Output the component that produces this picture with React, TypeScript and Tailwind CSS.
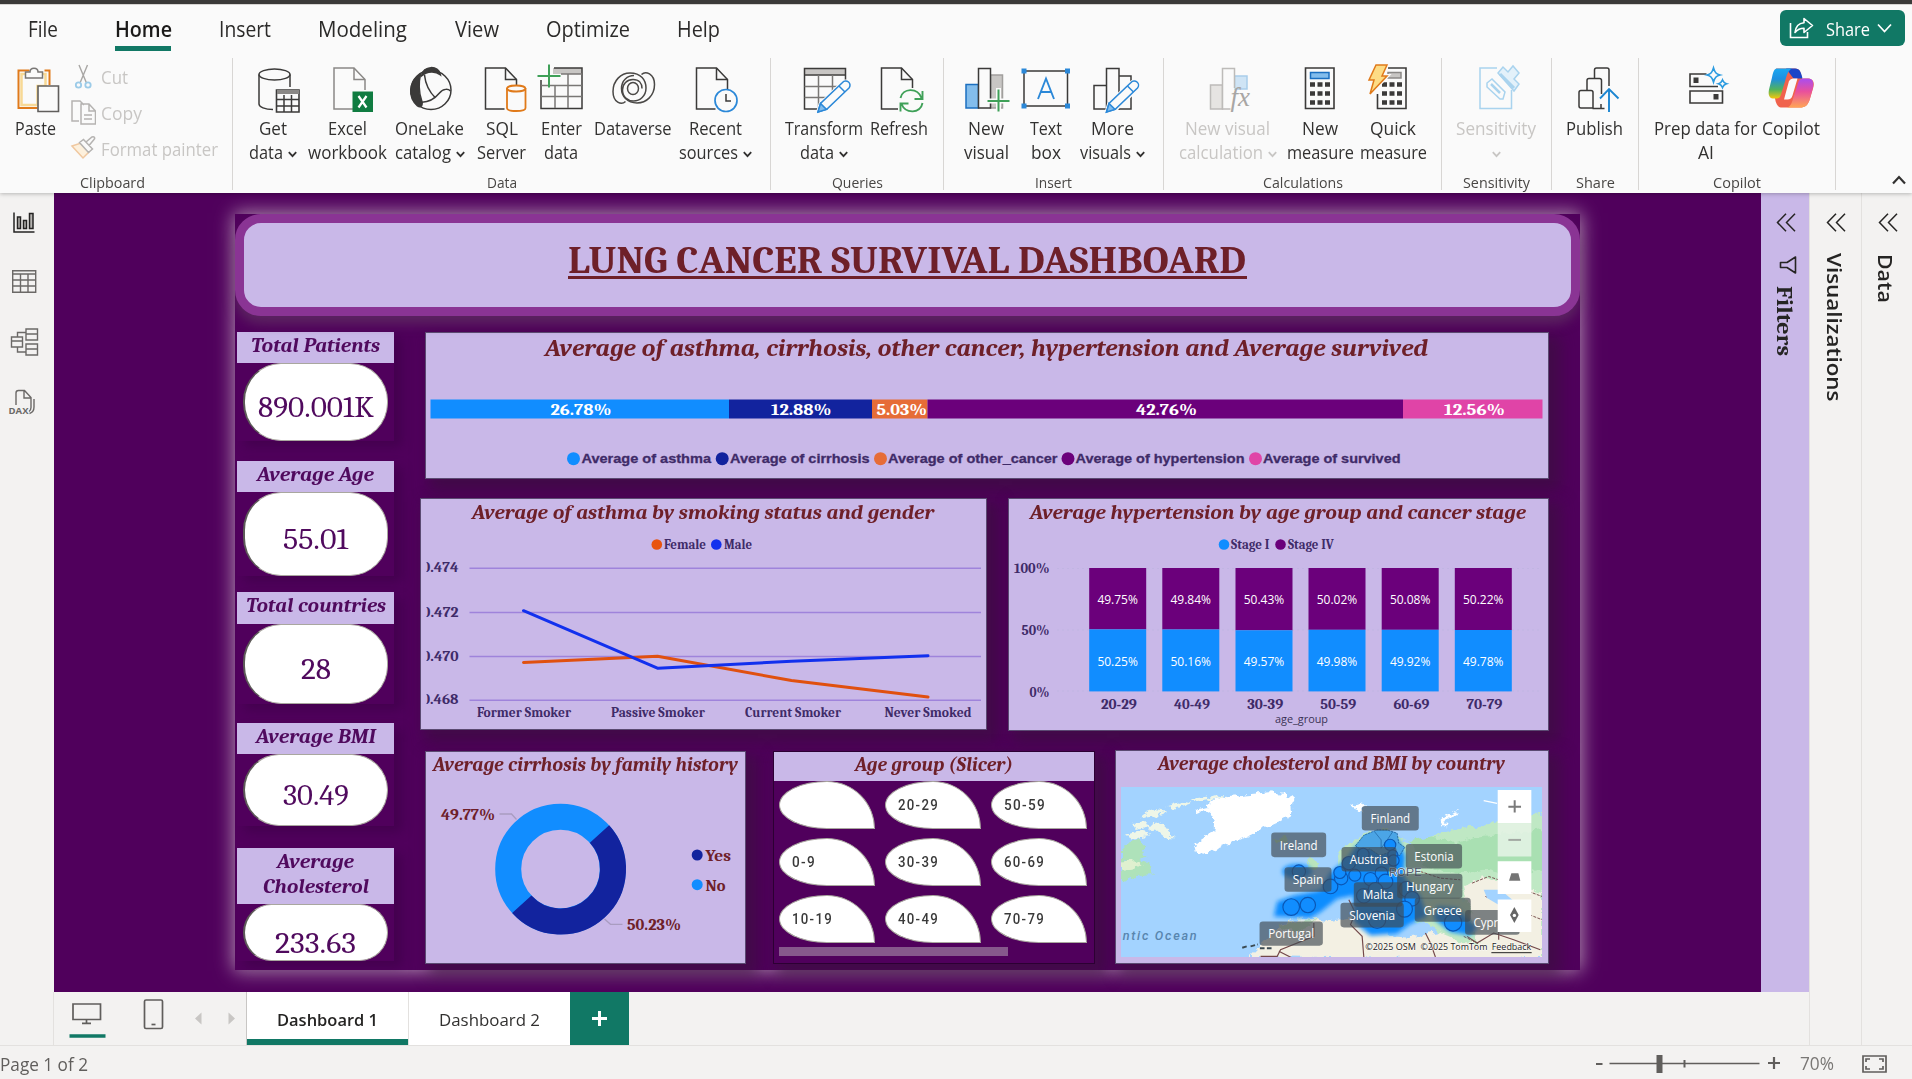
import React, { useLayoutEffect, useRef } from "react";

const SERIF = "font-[Cambria,Caladea,'Liberation_Serif',serif]";

/* Text that is condensed or expanded to a given advance width. */
function Fit({ w, className = "", vertical = false, children }: { w: number; className?: string; vertical?: boolean; children: React.ReactNode }) {
  const ref = useRef<HTMLSpanElement>(null);
  useLayoutEffect(() => {
    const el = ref.current;
    if (!el) return;
    const size = vertical ? el.offsetHeight : el.getBoundingClientRect().width;
    if (!size) return;
    el.style.transform = vertical ? `scaleY(${w / size})` : `scaleX(${w / size})`;
  }, [w, vertical, children]);
  return (
    <span className={"block shrink-0 whitespace-nowrap " + className} style={vertical ? { height: w } : { width: w }}>
      <span ref={ref} className={"inline-block " + (vertical ? "origin-top [writing-mode:vertical-rl]" : "origin-left")}>
        {children}
      </span>
    </span>
  );
}

function Chev({ className = "" }: { className?: string }) {
  return (
    <svg className={"h-[7px] w-[9px] shrink-0 " + className} viewBox="0 0 9 7" fill="none" stroke="currentColor" strokeWidth="1.8">
      <path d="M.8 1.2 4.5 5.2 8.2 1.2" />
    </svg>
  );
}

type Line = [string, number, boolean?];

function Item({ box, vx, lines, dim = false, children }: { box: string; vx: number; lines: Line[]; dim?: boolean; children: React.ReactNode }) {
  return (
    <div className={"flex shrink-0 flex-col items-center " + box + (dim ? " text-[#c8c6c4]" : " text-[#323130]")}>
      <svg className="h-[54px] w-[56px] shrink-0" viewBox={`${vx} 62 56 54`} fill="none" stroke="#3b3a39" strokeWidth="1.5">
        {children}
      </svg>
      {lines.map(([t, w, c], i) => (
        <div key={i} className="flex h-6 items-center gap-[5px] text-[17.500px] leading-6">
          {t && <Fit w={w}>{t}</Fit>}
          {c && <Chev className="mt-[5px]" />}
        </div>
      ))}
    </div>
  );
}

function Group({ box, label, lw, lcls = "", children }: { box: string; label: string; lw: number; lcls?: string; children: React.ReactNode }) {
  return (
    <div className={"flex shrink-0 " + box}>
      <div className="flex min-w-0 flex-1 flex-col items-center">
        <div className="flex h-[114px] w-full pt-1">{children}</div>
        <Fit w={lw} className={"text-[15px] leading-5 text-[#484644] " + lcls}>{label}</Fit>
      </div>
      <div className="h-[132px] w-px bg-[#d8d6d4]" />
    </div>
  );
}

function Doc({ x }: { x: number }) {
  return (
    <g>
      <path d={`M${x + 19} 109H${x}V68H${x + 20}L${x + 31} 79.500V90`} fill="none" />
      <path d={`M${x + 20} 68V79.500H${x + 31}`} />
    </g>
  );
}

function Pencil({ x }: { x: number }) {
  return (
    <g stroke="#2b88d8">
      <path d={`M${x} 112.500l2.500-8.500 22-21a4 4 0 0 1 6.500 5.500l-22 21z`} fill="#fafafa" stroke="#fafafa" strokeWidth="4" />
      <path d={`M${x} 112l2.500-8.500 22-21a4 4 0 0 1 6.500 5.500l-22 21z`} fill="#fafafa" />
      <path d={`M${x} 112l2.500-8.500 6 6z`} fill="#83bdec" />
      <path d={`M${x + 21} 86l6 6`} />
    </g>
  );
}

function Ribbon() {
  const tabs: [string, number, string][] = [
    ["File", 30, "ml-[28px]"],
    ["Home", 57, "ml-[57px]"],
    ["Insert", 52, "ml-[47px]"],
    ["Modeling", 89, "ml-[47px]"],
    ["View", 44, "ml-[48px]"],
    ["Optimize", 84, "ml-[47px]"],
    ["Help", 43, "ml-[47px]"],
  ];
  return (
    <header className="relative z-10 h-[193px] bg-[#fafafa] shadow-[0_1px_4px_rgba(0,0,0,0.25)]">
      <div className="h-[4px] bg-[#3b3a39]" />
      <div className="flex h-[54px] border-t border-[#d6d4d2]">
        {tabs.map(([t, w, m]) => (
          <div key={t} className={m + " pt-[8.500px]"}>
            <Fit w={w} className={"text-[21px] leading-[30px] " + (t === "Home" ? "font-semibold text-[#1b1a19]" : "text-[#2b2a29]")}>{t}</Fit>
            {t === "Home" && <div className="mt-[2.500px] h-[5px] w-[56px] bg-[#117865]" />}
          </div>
        ))}
        <button className="mt-[5px] mr-[7px] ml-auto flex h-[36px] w-[125px] items-center rounded-[6px] bg-[#117865] text-white">
          <svg className="ml-[9px] h-[24px] w-[26px]" viewBox="0 0 26 24" fill="none" stroke="#fff" strokeWidth="1.6">
            <path d="M1.500 7v14.500h17V16" />
            <path d="M15 2.500l8.500 7-8.500 7v-4.200c-4 0-6.500 1.200-9 4.200.6-6 3.500-9.300 9-9.800z" strokeLinejoin="round" />
          </svg>
          <Fit w={44} className="mt-px ml-[11px] text-[17.500px] leading-6">Share</Fit>
          <svg className="ml-[7px] h-[10px] w-[15px]" viewBox="0 0 15 10" fill="none" stroke="#fff" strokeWidth="1.7"><path d="M1 1.500l6.500 7 6.500-7" /></svg>
        </button>
      </div>
      <div className="flex">
        <Group box="w-[233px]" label="Clipboard" lw={65} lcls="mr-[7px]">
          <Item box="ml-[8px] w-[54px]" vx={7.5} lines={[["Paste", 41]]}>
            <path d="M30 70.500H19V108h19M45 70.500h5V85" stroke="#e07a1a" strokeWidth="2" />
            <path d="M22 74v31h16V86h8V74z" stroke="#f8d995" strokeWidth="2.500" fill="#fafafa" />
            <path d="M26 78v-6h4.500c0-5 8-5 8 0H43v6z" fill="#fafafa" stroke="#797775" />
            <path d="M38.500 86h20.500v25.500H38.500z" fill="#fafafa" strokeWidth="1.600" stroke="#605e5c" />
          </Item>
          <div className="ml-[8px] flex w-[155px] flex-col text-[17.500px] leading-6 text-[#c8c6c4]">
            <div className="flex h-[36px] gap-[4px]">
              <svg className="h-[30px] w-[26px]" viewBox="70 62 26 30" fill="none" stroke="#a8a6a4" strokeWidth="1.400">
                <path d="M79 65l7.500 18M87.500 65l-7.500 18" /><circle cx="78.500" cy="85" r="2.700" stroke="#9ccbe8" strokeWidth="1.800" /><circle cx="88" cy="85" r="2.700" stroke="#9ccbe8" strokeWidth="1.800" />
              </svg>
              <Fit w={27} className="mt-[3px] ml-[1px]">Cut</Fit>
            </div>
            <div className="flex h-[36px] gap-[4px]">
              <svg className="h-[30px] w-[26px]" viewBox="70 98 26 30" fill="none" stroke="#b5b3b1" strokeWidth="1.500">
                <path d="M79 121h-7v-20h8l4 4M81 104h8l6.500 7v13H81zM89 104v7h6M84 115h8M84 119h8" />
              </svg>
              <Fit w={41} className="mt-[3px] ml-[1px]">Copy</Fit>
            </div>
            <div className="flex h-[36px] gap-[4px]">
              <svg className="h-[30px] w-[26px]" viewBox="70 134 26 30" fill="none" stroke="#b5b3b1" strokeWidth="1.500">
                <path d="M72 146l9-3 8 9-6 6z" stroke="#f0c8a0" fill="#fdf0dc" /><path d="M79.500 142.500l4-3 9 9.500-4 3.500zM86 142l6-5c2-1 3.500 1 2 2.500l-5 6" fill="#fafafa" />
              </svg>
              <Fit w={117} className="mt-[3px] ml-[1px]">Format painter</Fit>
            </div>
          </div>
        </Group>

        <Group box="w-[538px]" label="Data" lw={30}>
          <Item box="ml-[12px] w-[56px]" vx={245} lines={[["Get", 28], ["data", 34, true]]}>
            <path d="M259 74.500V104c0 3 6 5.500 14 5.500M290 74.500V87" /><ellipse cx="274.500" cy="74.500" rx="15.500" ry="5.500" />
            <path d="M276.500 90h22.500v22h-22.500z" fill="#fafafa" strokeWidth="1.600" /><path d="M277 92h22" strokeWidth="4" stroke="#8a8886" /><path d="M277 99.500h22M277 106h22M284 95v17M291.500 95v17" />
          </Item>
          <Item box="ml-[6.500px] w-[80px]" vx={319.5} lines={[["Excel", 39], ["workbook", 79]]}>
            <g stroke="#8a8886"><Doc x={333.5} /></g>
            <path d="M352 91.500h20.500V112H352z" fill="#107c41" stroke="none" />
            <path d="M358 96l8 11.500M366 96l-8 11.500" stroke="#fff" strokeWidth="2.200" />
          </Item>
          <Item box="ml-[5px] w-[74px]" vx={401.5} lines={[["OneLake", 69], ["catalog", 56, true]]}>
            <ellipse cx="430.500" cy="90" rx="20" ry="19.500" />
            <path d="M421 76c1-11 18-11 19-1-5-4-13-4-19 1z" fill="#3b3a39" />
            <path d="M420 74c-12 8-13 23-3 32 3 2 6 0 4-6-3-9-3-17-1-26z" fill="#3b3a39" />
            <path d="M424 75c1 10 5 17 11 23M419 102c9 1 15-3 20-9 4-5 9-4 11-2" />
          </Item>
          <Item box="ml-[10px] w-[50px]" vx={473.5} lines={[["SQL", 32], ["Server", 49]]}>
            <Doc x={485} />
            <path d="M506.500 88v20c0 4 18.500 4 18.500 0V88" stroke="#e07a1a" fill="#fafafa" strokeWidth="1.800" /><ellipse cx="515.700" cy="88.500" rx="9.200" ry="3" stroke="#e07a1a" fill="#fafafa" strokeWidth="1.800" />
          </Item>
          <Item box="ml-[12.500px] w-[44px]" vx={533} lines={[["Enter", 41], ["data", 34]]}>
            <path d="M553 71h29" stroke="#c8c6c4" strokeWidth="6" /><path d="M554 68h28v40.500h-41V80" /><path d="M561 74h21M541 85.500h41M541 96.500h41M555 86v22M568 74v34" stroke="#797775" />
            <path d="M549 64.500v23M537.500 76h23" stroke="#3fa058" strokeWidth="2" />
          </Item>
          <Item box="ml-[11px] w-[78px]" vx={605} lines={[["Dataverse", 77.5]]}>
            <g stroke="#4a4846">
              <path d="M625.500 101.500c-4 4-12.500 1-12.500-10 0-11 8-18.500 17-18.500 11 0 16 7 16 15 0 8-6 13-12.500 13-6 0-11-4-11-11 0-6 4.500-10.500 10.500-10.500s9 4 9 9" />
              <path d="M641.500 74.500c4-4 13-1 13 10 0 11-8 18.500-17.500 18.500-10 0-15.500-7-15.500-14.500 0-8 6-13 12.500-13" />
              <ellipse cx="633" cy="88.500" rx="5.500" ry="6" />
            </g>
          </Item>
          <Item box="ml-[6px] w-[74px]" vx={690} lines={[["Recent", 53], ["sources", 59, true]]}>
            <Doc x={699.5} />
            <circle cx="729" cy="100.500" r="11" stroke="#2b88d8" fill="#fafafa" strokeWidth="1.700" /><path d="M729 94v7h5" />
          </Item>
        </Group>

        <Group box="w-[173px]" label="Queries" lw={51}>
          <Item box="ml-[12.500px] w-[80px]" vx={795.5} lines={[["Transform", 78], ["data", 34, true]]}>
            <path d="M804 71.500h41" stroke="#c8c6c4" strokeWidth="6" /><path d="M845 80V68.500h-41V109h15M804 75h41" /><path d="M804 86.500h35M804 97.500h25M818 75v34M832 75v20" stroke="#797775" />
            <Pencil x={817.5} />
          </Item>
          <Item box="ml-[5.500px] w-[60px]" vx={871} lines={[["Refresh", 58]]}>
            <Doc x={881.5} />
            <path d="M898 88h26v25h-26z" fill="#fafafa" stroke="none" />
            <g stroke="#3fa058" strokeWidth="1.900"><path d="M900.500 98c2-10 17-11 21 0M922.500 91v8h-8M922.500 103c-2 11-17 11-21 1M900.500 111.500v-8h8" /></g>
          </Item>
        </Group>

        <Group box="w-[220px]" label="Insert" lw={37}>
          <Item box="ml-[19px] w-[46px]" vx={958} lines={[["New", 36], ["visual", 45]]}>
            <path d="M990.500 75h12v33h-12z" fill="#c8c6c4" stroke="#a19f9d" />
            <path d="M966 84.500h12.500V108H966z" fill="#83bdec" stroke="#1b6fc0" /><path d="M978.500 68.500h12V108h-12z" fill="#fafafa" />
            <path d="M998.500 88v24M986 101h24" stroke="#fafafa" strokeWidth="5" /><path d="M998.500 89.500v22M987.500 101h22" stroke="#3fa058" strokeWidth="2" />
          </Item>
          <Item box="ml-[20px] w-[34px]" vx={1018} lines={[["Text", 32], ["box", 30]]}>
            <path d="M1024 71h43.500v35H1024z" />
            <path d="M1021.500 68.500h5v5h-5zM1065 68.500h5v5h-5zM1021.500 103.500h5v5h-5zM1065 103.500h5v5h-5z" fill="#2b88d8" stroke="none" />
            <path d="M1038 99l8-20.500 8 20.500M1041 92h10" stroke="#2b88d8" strokeWidth="1.900" />
          </Item>
          <Item box="ml-[16px] w-[66px]" vx={1084} lines={[["More", 43], ["visuals", 51, true]]}>
            <path d="M1119 76h12v33h-12M1106.500 85.500H1094V109h12.500" /><path d="M1106.500 68.500h12.500V109h-12.500z" fill="#fafafa" />
            <Pencil x={1106.5} />
          </Item>
        </Group>

        <Group box="w-[278px]" label="Calculations" lw={80}>
          <Item dim box="ml-[13.500px] w-[100px]" vx={1199.5} lines={[["New visual", 85], ["calculation", 84, true]]}>
            <g stroke="#bdbbb9"><path d="M1234 76h12.500v13H1234z" fill="#cfe4f5" stroke="#a9cdea" /><path d="M1210 85h12v24h-12z" fill="#e6e4e2" /><path d="M1234 88V68.500h-12V109h8" fill="#fafafa" /></g>
            <text x="1230" y="106" fontSize="27" fontStyle="italic" fill="#a8a6a4" stroke="none" fontFamily="Liberation Serif, serif">fx</text>
          </Item>
          <Item box="ml-[8.500px] w-[68px]" vx={1292} lines={[["New", 36], ["measure", 67]]}>
            <path d="M1305.500 68h28.500v40.500h-28.500z" strokeWidth="1.600" /><path d="M1310.500 72.500h18.500v6h-18.500z" fill="#83bdec" stroke="#1b6fc0" />
            <path d="M1310 84.500h20M1310 93.500h20M1310 102.500h20" strokeWidth="4.500" strokeDasharray="5 2.500" />
          </Item>
          <Item box="ml-[5px] w-[68px]" vx={1365} lines={[["Quick", 46], ["measure", 67]]}>
            <path d="M1388 68h18v40.500h-28.500V94" strokeWidth="1.600" /><path d="M1388 72.500h13v5.500h-13z" fill="#c8c6c4" stroke="#8a8886" />
            <path d="M1382 84.500h20M1382 93.500h20M1382 102.500h20" strokeWidth="4.500" strokeDasharray="5 2.500" />
            <path d="M1376 65h11l-5 11h5l-17 18 4-14h-5z" fill="#fddc85" stroke="#fafafa" strokeWidth="4" /><path d="M1376 65h11l-5 11h5l-17 18 4-14h-5z" fill="#fddc85" stroke="#e07a1a" />
          </Item>
        </Group>

        <Group box="w-[110px]" label="Sensitivity" lw={67}>
          <Item dim box="ml-[13px] w-[82px]" vx={1468} lines={[["Sensitivity", 80], ["", 0, true]]}>
            <g stroke="#a9d3ee"><path d="M1497 68h-17v40.500h31.500V90" /><path d="M1487 83l5-4 13 13-2 7-3 0-13-12z" fill="#fafafa" /><path d="M1491 84l9 9" strokeWidth="2.500" /><path d="M1498 73l5-6 5 5 5-6 6 7-5 6 5 5-5 7z" fill="#e3f1fa" /><path d="M1500 74l14 14" strokeWidth="3" /></g>
          </Item>
        </Group>

        <Group box="w-[87px]" label="Share" lw={39}>
          <Item box="ml-[13.500px] w-[58px]" vx={1566.5} lines={[["Publish", 57]]}>
            <g><path d="M1594 78v-8q0-2 2-2h10.500q2 0 2 2v16M1586.500 90V80.500q0-2 2-2h10.500q2 0 2 2V94M1578.500 106V92.500q0-2 2-2h10q2 0 2 2v15.500h-12q-2 0-2-2M1592 108.500h12M1600.500 104v4" /></g>
            <path d="M1608.500 112V90M1599.500 98.500l9-9.500 9.500 9.500" stroke="#1c86d1" strokeWidth="1.900" />
          </Item>
        </Group>

        <Group box="w-[197px]" label="Copilot" lw={48}>
          <Item box="ml-[14.500px] w-[104px]" vx={1677.500} lines={[["Prep data for", 103], ["AI", 16]]}>
            <g strokeWidth="1.600"><path d="M1706 74h-16.500v12.500h28M1689.500 91h32.500v12h-32.500z" /></g>
            <path d="M1693 77.500h5v5.500h-5zM1713 94h5v5.500h-5z" fill="#3b3a39" stroke="none" />
            <path d="M1713 68c1.500 5 3 6 6.500 7-3.500 1-5 2-6.500 7-1.500-5-3-6-6.500-7 3.500-1 5-2 6.500-7zM1722 80c1 2.500 1.500 3 4 3.700-2.500.8-3 1.300-4 3.800-1-2.500-1.500-3-4-3.800 2.500-.7 3-1.200 4-3.700z" stroke="#2b9be0" strokeWidth="1.700" />
          </Item>
          <Item box="ml-[4.500px] w-[58px]" vx={1763} lines={[["Copilot", 58]]}>
            <defs>
              <linearGradient id="cp1" x1="0" y1="0" x2="0" y2="1"><stop offset="0" stopColor="#1aa7f0" /><stop offset=".35" stopColor="#1d8fe0" /><stop offset=".7" stopColor="#52b35c" /><stop offset="1" stopColor="#f5c70c" /></linearGradient>
              <linearGradient id="cp2" x1="0" y1="0" x2="0" y2="1"><stop offset="0" stopColor="#a94df0" /><stop offset=".45" stopColor="#e9509c" /><stop offset="1" stopColor="#ffa655" /></linearGradient>
            </defs>
            <path d="M1776 68.500h19c5 0 6 4 7 10h6c5 0 7 4 5 10l-3 10c-2 7-5 9-10 9h-18c-4 0-6-3-7-9z" fill="#f0624c" stroke="none" />
            <path d="M1786 68.500h9c5 0 6 4 7.500 10h-9z" fill="#1b45c8" stroke="none" />
            <path d="M1777 68.500h15c-4 2-5 6-7 13l-4 13c-1 3-2 4-4 4h-3c-5 0-6-4-5-9l3-12c1-5 2-9 5-9z" fill="url(#cp1)" stroke="none" />
            <path d="M1805 78.500h3c5 0 6 4 5 9l-3 11c-2 7-5 9-10 9h-13c4-1 5-5 7-12l4-12c1-4 3-5 7-5z" fill="url(#cp2)" stroke="none" />
            <path d="M1789 81q1.500-2.500 4-2.500h4.500l-5 17q-1 4-5 4h-3.500z" fill="#fafafa" stroke="none" />
          </Item>
        </Group>
        <svg className="mt-[117px] mr-[6px] ml-auto h-[10px] w-[14px]" viewBox="0 0 14 10" fill="none" stroke="#323130" strokeWidth="2.200"><path d="M1 8.500 7 2l6 6.500" /></svg>
      </div>
    </header>
  );
}

function LeftRail() {
  return (
    <nav className="flex w-[54px] shrink-0 flex-col bg-[#f3f2f1] pt-[15px]">
      <svg className="h-[220px] w-[54px]" viewBox="0 208 54 220" fill="none" stroke="#6b6967" strokeWidth="1.400">
        <g stroke="#252423" strokeWidth="1.500"><path d="M14 212.500v19.500h20.500" /><path d="M17.500 217h3v11.500h-3zM23.500 220.500h3v8h-3zM29.500 213.500h3.500v15h-3.500z" fill="#b5b3b1" /></g>
        <path d="M12.700 270.700h23v21.600h-23zM12.700 274h23M12.700 280h23M12.700 286h23M20.500 274v18.300M28 274v18.300" />
        <path d="M26 329h11.500v11H26zM26 334h11.500M11.500 337h11v10h-11zM11.500 341h11M26 344h11.500v11H26zM26 349h11.500M17.500 337v-4.500H26M17.500 347v5H26" />
        <path d="M16 405v-12q0-2.500 2.500-2.500h6l6.500 7v10q0 2.500-2 4M24 390.500v7.500h7M34 399v8q0 5-4.500 6.500" />
        <text x="8.500" y="414" fontSize="9.500" fontWeight="700" fill="#6b6967" stroke="none" fontFamily="Open Sans, sans-serif" textLength="20" lengthAdjust="spacingAndGlyphs">DAX</text>
      </svg>
    </nav>
  );
}

const T = ({ x, y, w, s = 13, f = "s", b = 700, fill = "#3f2b68", children }: { x: number; y: number; w: number; s?: number; f?: string; b?: number; fill?: string; children: string }) => (
  <text x={x} y={y} textLength={w} lengthAdjust="spacingAndGlyphs" fontSize={s} fontWeight={b} fill={fill}
    fontFamily={f === "s" ? "Cambria, Caladea, 'Liberation Serif', serif" : f === "o" ? "'Open Sans', sans-serif" : "'Liberation Sans', sans-serif"}>{children}</text>
);

function Kpi({ lines, value, vw, head, pill, vpt }: { lines: [string, number][]; value: string; vw: number; head: string; pill: string; vpt: string }) {
  return (
    <div className="w-[157px] shrink-0 shadow-[8px_6px_10px_rgba(50,0,60,0.4)]">
      <div className={"flex flex-col items-center bg-[#c9b8e8] pt-px " + head}>
        {lines.map(([t, w]) => (
          <Fit key={t} w={w} className={"text-[20px] leading-[25px] font-bold text-[#500a5e] italic " + SERIF}>{t}</Fit>
        ))}
      </div>
      <div className={"ml-[5.500px] flex w-[145px] justify-center rounded-[38px] border border-l-[2px] border-[#a9a79f] border-l-[#5d5a58] bg-white " + pill}>
        <div className={vpt}>
          <Fit w={vw} className={"text-[30px] leading-[34px] text-[#500a5e] " + SERIF}>{value}</Fit>
        </div>
      </div>
    </div>
  );
}

function Card({ box, title, tw, tcls, children }: { box: string; title: string; tw: number; tcls: string; children: React.ReactNode }) {
  return (
    <section className={"flex shrink-0 flex-col border border-[#5b4a72] bg-[#c9b8e8] shadow-[8px_8px_14px_4px_rgba(56,16,60,0.6)] " + box}>
      <div className="flex justify-center">
        <Fit w={tw} className={"font-bold text-[#6e2029] italic " + SERIF + " " + tcls}>{title}</Fit>
      </div>
      {children}
    </section>
  );
}

function SurvivalBar() {
  const segs: [number, number, string, string, number, number][] = [
    [430, 728.5, "#118dff", "26.78%", 550, 61],
    [728.5, 871.5, "#12239e", "12.88%", 770.5, 60.5],
    [871.5, 927, "#e66c37", "5.03%", 876, 50.5],
    [927, 1402.5, "#6b007b", "42.76%", 1135.5, 61],
    [1402.5, 1542, "#e044a7", "12.56%", 1443.5, 61],
  ];
  const leg: [number, string, string, number, number][] = [
    [573, "#118dff", "Average of asthma", 581, 129.5],
    [721.7, "#12239e", "Average of cirrhosis", 729.5, 139.5],
    [880, "#e66c37", "Average of other_cancer", 887.5, 169.5],
    [1067.5, "#6b007b", "Average of hypertension", 1075, 169],
    [1255, "#e044a7", "Average of survived", 1262.5, 137.5],
  ];
  return (
    <svg className="h-[109px] w-[1122px]" viewBox="425.500 367 1122 109">
      {segs.map(([a, b, c, t, x, w]) => (
        <g key={t}><rect x={a} y="399.500" width={b - a} height="19" fill={c} /><T x={x} y={414.500} w={w} s={17} fill="#fff">{t}</T></g>
      ))}
      {leg.map(([cx, c, t, x, w]) => (
        <g key={t} stroke="#3f2b68" strokeWidth="0.300"><circle cx={cx} cy="458.700" r="6.500" fill={c} stroke="none" /><T x={x} y={463.300} w={w} s={13} f="a">{t}</T></g>
      ))}
    </svg>
  );
}

function LineChart() {
  const cats: [string, number, number][] = [["Former Smoker", 476.5, 94], ["Passive Smoker", 610.5, 94], ["Current Smoker", 744.5, 96], ["Never Smoked", 884, 87]];
  const ys: [string, number][] = [["0.474", 568.3], ["0.472", 612.5], ["0.470", 656.5], ["0.468", 700.3]];
  return (
    <svg className="h-[198px] w-[565px]" viewBox="420.500 530 565 198">
      <circle cx="656.300" cy="544.500" r="5.300" fill="#e8540f" /><T x={663.500} y={549} w={42}>Female</T>
      <circle cx="715.800" cy="544.500" r="5.300" fill="#1230ee" /><T x={723.500} y={549} w={28}>Male</T>
      <clipPath id="yclip"><rect x="426" y="530" width="40" height="190" /></clipPath>
      {ys.map(([t, y]) => (
        <g key={t}><path d={`M469 ${y}H980.500`} stroke="#9f83db" strokeWidth="1.500" /><g clipPath="url(#yclip)"><T x={421.500} y={y + 4} w={36.500}>{t}</T></g></g>
      ))}
      {cats.map(([t, x, w]) => <T key={t} x={x} y={716.500} w={w}>{t}</T>)}
      <path d="M523 662.500 657 656.300 791 680.500 927.500 697" fill="none" stroke="#e0500f" strokeWidth="3" strokeLinecap="round" strokeLinejoin="round" />
      <path d="M523 610.700 657.500 668.300 791 661.300 927.500 655.700" fill="none" stroke="#1230ee" strokeWidth="3" strokeLinecap="round" strokeLinejoin="round" />
    </svg>
  );
}

function StackChart() {
  const bars: [number, string, string, string, number][] = [
    [1088.7, "20-29", "49.75%", "50.25%", 629.4], [1161.8, "40-49", "49.84%", "50.16%", 629.5], [1235, "30-39", "50.43%", "49.57%", 630.3],
    [1308, "50-59", "50.02%", "49.98%", 629.8], [1381.2, "60-69", "50.08%", "49.92%", 629.8], [1454.3, "70-79", "50.22%", "49.78%", 630],
  ];
  return (
    <svg className="h-[199px] w-[539px]" viewBox="1008.500 530 539 199">
      <circle cx="1223.500" cy="544.500" r="5.300" fill="#118dff" /><T x={1230.500} y={549} w={38.500}>Stage I</T>
      <circle cx="1280" cy="544.500" r="5.300" fill="#6b007b" /><T x={1287.500} y={549} w={46}>Stage IV</T>
      <path d="M1057 568.500h485M1057 630h485M1057 691h485" stroke="#b9b3dc" strokeDasharray="1 4" />
      <T x={1013.500} y={573} w={35.500} s={14.5}>100%</T><T x={1021} y={635} w={28} s={14.5}>50%</T><T x={1029} y={697} w={20} s={14.5}>0%</T>
      {bars.map(([x, c, a, b, m]) => (
        <g key={c}>
          <rect x={x} y="568" width="57" height={m - 568} fill="#6b007b" /><rect x={x} y={m} width="57" height={691.4 - m} fill="#118dff" />
          <T x={x + 8.200} y={603.500} w={40.500} s={13} f="o" b={500} fill="#fff">{a}</T>
          <T x={x + 8.200} y={665.500} w={40.500} s={13} f="o" b={500} fill="#fff">{b}</T>
          <T x={x + 11.700} y={708.500} w={36} s={14.5}>{c}</T>
        </g>
      ))}
      <T x={1274.500} y={723} w={53} s={11.5} f="o" b={500} fill="#3b3355">age_group</T>
    </svg>
  );
}

function Donut() {
  return (
    <svg className="h-[181px] w-[319px]" viewBox="425.500 781 319 181">
      <circle cx="560" cy="869" r="52.300" fill="none" stroke="#118dff" strokeWidth="26" />
      <path d="M599 834A52.300 52.300 0 1 1 521.300 904.200" fill="none" stroke="#12239e" strokeWidth="26" />
      <path d="M499 814h12l5 5.500M604 919l6 5.300h12" fill="none" stroke="#a99cc0" strokeWidth="1.300" />
      <T x={440.500} y={819.500} w={54} s={16.500} fill="#6e2029">49.77%</T>
      <T x={626.500} y={929.500} w={54} s={16.500} fill="#6e2029">50.23%</T>
      <circle cx="696.700" cy="855" r="5.500" fill="#12239e" /><T x={705} y={860.500} w={25.500} s={17} fill="#6e2029">Yes</T>
      <circle cx="696.700" cy="884.700" r="5.500" fill="#118dff" /><T x={705} y={890.500} w={20} s={17} fill="#6e2029">No</T>
    </svg>
  );
}

function Slicer() {
  const cells: [string, number][] = [["", 0], ["20-29", 41], ["50-59", 42], ["0-9", 24], ["30-39", 41], ["60-69", 41], ["10-19", 41], ["40-49", 41], ["70-79", 41]];
  return (
    <section className="mt-px ml-[27px] flex h-[213px] w-[322px] shrink-0 flex-col border border-[#2c0033] bg-[#50005c] shadow-[8px_8px_14px_4px_rgba(56,16,60,0.6)]">
      <div className="flex h-[29px] shrink-0 justify-center bg-[#c9b8e8]">
        <Fit w={158} className={"text-[20px] leading-[26px] font-bold text-[#6e2029] italic " + SERIF}>Age group (Slicer)</Fit>
      </div>
      <div className="ml-[5px] grid grid-cols-[96px_96px_96px] gap-x-[10px] gap-y-[9px]">
        {cells.map(([t, w]) => (
          <div key={t} className="flex h-[48px] items-center rounded-[50%_50%_0_50%/50%_100%_0_50%] border border-[#a9a79f] bg-white pl-[12px]">
            {t && <Fit w={w} className="font-[Roboto,sans-serif] text-[15.500px] leading-5 font-medium tracking-[1.500px] text-[#3a3a3a]">{t}</Fit>}
          </div>
        ))}
      </div>
      <div className="mt-[4px] ml-[5px] h-[9px] w-[229px] bg-[#86588c]" />
    </section>
  );
}

function CountryMap() {
  const labels: [string, number, number, number, number, number][] = [
    ["Finland", 784, 198, 171, 74, 119], ["Ireland", 512, 278, 165, 74, 113], ["Estonia", 916, 312, 169, 74, 118], ["Austria", 723, 321, 165, 74, 115],
    ["Spain", 552, 382, 141, 74, 92], ["Hungary", 890, 402, 196, 74, 142], ["Malta", 760, 427, 146, 74, 93], ["Greece", 943, 474, 168, 72, 115],
    ["Slovenia", 720, 489, 190, 74, 138], ["Cypr", 1094, 511, 164, 74, 75], ["Portugal", 477, 545, 190, 73, 138],
  ];
  const dots = [[595, 395, 20], [572, 502, 25], [622, 496, 23], [690, 440, 22], [722, 415, 20], [763, 406, 18], [788, 343, 18], [869, 315, 17], [877, 345, 15], [879, 362, 17], [810, 418, 20], [843, 400, 19], [855, 425, 22], [790, 468, 22], [825, 450, 22], [918, 448, 23], [935, 477, 22], [912, 508, 24], [830, 540, 26], [1058, 548, 26], [745, 370, 20], [718, 398, 18]];
  return (
    <svg className="mt-[5px] ml-[5px] h-[170px] w-[421px]" viewBox="61 141 1264 511" preserveAspectRatio="none">
      <defs>
        <filter id="soft" x="-30%" y="-30%" width="160%" height="160%"><feGaussianBlur stdDeviation="6" /></filter>
        <filter id="edge" x="-5%" y="-5%" width="110%" height="110%"><feTurbulence type="fractalNoise" baseFrequency=".05" numOctaves="3" result="n" /><feDisplacementMap in="SourceGraphic" in2="n" scale="26" xChannelSelector="R" yChannelSelector="G" /></filter>
      </defs>
      <path d="M61 141h1264v511H61z" fill="#a3d3ff" />
      <g filter="url(#edge)">
        <path d="M290 218l-2-12 42-10-5-12 60-16 60-5 60-6 50 5 30 14-15 30 2 20-40 22-50 22-35 18-50 20-35 12-30 12-10 14-35-8-5-20 30-24 26-20 4-30-8-22-20-14z" fill="#fff" />
        <path d="M270 178l80-12 30 6-90 14zM200 198l50-14 20 4-50 18zM125 222l40-14 35 4-40 18-40 6zM160 245l30 12 30 38-20 0-30-25-25-10zM95 252l40-5 20 10-50 10zM75 285l40-15 30 8-10 12-40 6z" fill="#eef6e8" />
        <path d="M61 330l25-25 25-10 20 20-10 20 20 15-35 10-45 2zM61 365l50-10 40 18 5 30-30 2-65 22z" fill="#aee2ba" />
        <path d="M61 365l40-4 25 12-30 16-35 4z" fill="#dff0cf" />
        <path d="M720 325l40-22 40-25 60-10 30 25 60 22 30-22 60-20 60-12 40 0 60-22 60-5 70-18v436H1060l-40-60-20-30-60-20-40-40-50-30-130-40-10-80z" fill="#bfe8c4" />
        <path d="M930 300l60-10 80 20 60-20 200-20v120l-90 20-80-20-90 10-100-20z" fill="#a9e0b2" />
        <path d="M1085 440l60-30 180 50v192h-140l-60-60z" fill="#f3f0e3" />
        <path d="M620 358l20 0 15 22-10 10-20-10zM515 297l40-2 15 10-30 5z" fill="#b9e4bc" />
        <path d="M745 198l35-6 20 6-15 6 5 14-20-8zM1020 240l12-12 40-12-4 8-30 12-8 14 16 8-20 2z" fill="#fff" />
      </g>
      <path d="M1115 430l50-20 30 10 50 20 80 30M1090 590l60 30M1155 470l70 30 100 40M960 395l60 20 60 5" fill="none" stroke="#7a5250" strokeWidth="3" strokeDasharray="9 4" />
      <path d="M1150 450l50 0 60 50-40 10-60-35z" fill="#a3d3ff" />
      <g filter="url(#edge)">
        <path d="M445 652l45-45 55-55 60-18 80 10 80-12 60 5 50 50 60 5 80-15 70 30 60 5 80 20 50 30z" fill="#f3f0e3" />
        <path d="M530 560l60-20 60 0-20 20-50 18zM960 490l80-20 60 10 20 40-60 10-60-10z" fill="#c9e6bd" />
      </g>
      <path d="M480 650h50l10-20 100-40 0-40M535 635l40 20M745 480l20 40-15 35 35 35 5 62M975 580l15 30 15 42M1100 590l30 20 50-30 60 20 80 30M1195 570v30" fill="none" stroke="#73484a" strokeWidth="3.500" />
      <path d="M1150 182l40 8" stroke="#fff" strokeWidth="4" fill="none" />
      <g filter="url(#soft)" fill="#118dff">
        <path d="M765 320l70-40 60 20 20 50-5 60 50 60 20 60-50 22-40 30-80 5-50-40 0-80-50 10-60-10 40-70 50-40z" />
        <ellipse cx="590" cy="395" rx="44" ry="22" /><path d="M520 530l10-45 50-18 100-20 40-60 40 30-50 60-50 40-30 18z" /><path d="M1010 500l60 5 60 60-20 22-60-10-50-40z" />
      </g>
      <path d="M765 318l25-32 40-16 30 0 30 10 5 30 18 12-15 25-30-10-30 10-30-20-20 8z" fill="#4ba5e6" stroke="#1c5f9c" strokeWidth="2.500" strokeDasharray="7 2" />
      <path d="M822 275l20 25 0 25 15-20 20-30" fill="none" stroke="#1c5f9c" strokeWidth="2" />
      {dots.map(([x, y, r], i) => <circle key={i} cx={x} cy={y} r={r} fill="#118dff" stroke="#0b57b5" strokeWidth="3.500" />)}
      <text x="865" y="408" textLength="98" lengthAdjust="spacingAndGlyphs" fontSize="32" fill="#5c6470" stroke="#e8f4ff" strokeWidth="3" paintOrder="stroke" fontFamily="Roboto, sans-serif">ROPE</text>
      <text x="66" y="600" textLength="222" fontSize="38" fontStyle="italic" fontWeight="500" fill="#5885ae" fontFamily="Roboto, sans-serif">ntic Ocean</text>
      <path d="M425 624l20-6M450 620l22-6M478 626h40" stroke="#3b4a52" strokeWidth="6" strokeDasharray="14 7" />
      {labels.map(([t, x, y, w, h, tw]) => (
        <g key={t}>
          <rect x={x} y={y} width={w} height={h} rx="10" fill="#404950" fillOpacity=".66" />
          <text x={x + (t === "Cypr" ? 25 : (w - tw) / 2)} y={y + 51} textLength={tw} lengthAdjust="spacingAndGlyphs" fontSize="39" fill="#fff" fontFamily="'Open Sans', sans-serif">{t}</text>
        </g>
      ))}
      <path d="M1192 150h101v100h-101zM1192 364h101v99h-101zM1192 479h101v98h-101z" fill="#fff" />
      <path d="M1192 250h101v100h-101z" fill="#e6f3e6" fillOpacity=".85" />
      <path d="M1243 181v37M1224 200h38" stroke="#7a7a7a" strokeWidth="6" /><path d="M1224 300h38" stroke="#a2a8a2" strokeWidth="6" />
      <path d="M1233 400h21l6 23h-34z" fill="#757575" /><path d="M1242 502l13 24-13 24-13-24z" fill="#666" /><circle cx="1242" cy="527" r="5" fill="#fff" />
      <g fontSize="27" fill="#222" fontFamily="'Open Sans', sans-serif" stroke="#fff" strokeOpacity=".8" strokeWidth="3" paintOrder="stroke">
        <text x="794" y="630" textLength="152" lengthAdjust="spacingAndGlyphs">©2025 OSM</text>
        <text x="960" y="630" textLength="201" lengthAdjust="spacingAndGlyphs">©2025 TomTom</text>
        <text x="1174" y="630" textLength="119" lengthAdjust="spacingAndGlyphs">Feedback</text>
      </g>
      <path d="M1173 639h121" stroke="#222" strokeWidth="3" />
    </svg>
  );
}

function Report() {
  return (
    <main className="w-[1707px] shrink-0 overflow-hidden bg-[#50005c] pt-[21px] pl-[181px]">
      <div className="flex h-[756px] w-[1344.500px] flex-col bg-[#50005c] shadow-[0_0_18px_1px_rgba(225,215,220,0.7)]">
        <div className="z-[1] h-[102px] shrink-0 rounded-[26px] border-[9px] border-[#8a3494] bg-[#c9b8e8] shadow-[0_8px_12px_rgba(100,60,100,0.6)]">
          <div className="flex justify-center pt-[11px]">
            <div className="w-[679px] border-b-[3px] border-[#6e2029]">
              <Fit w={678} className={"h-[42px] text-[39px] leading-[54px] font-bold text-[#6e2029] " + SERIF}>LUNG CANCER SURVIVAL DASHBOARD</Fit>
            </div>
          </div>
        </div>
        <div className="flex">
          <div className="flex w-[184.500px] shrink-0 flex-col pt-[16px] pl-[2px]">
            <Kpi lines={[["Total Patients", 129]]} value="890.001K" vw={116} head="h-[31px]" pill="h-[78px]" vpt="pt-[27px]" />
            <div className="h-[20px]" />
            <Kpi lines={[["Average Age", 117]]} value="55.01" vw={65} head="h-[31px]" pill="h-[84px]" vpt="pt-[30px]" />
            <div className="h-[16px]" />
            <Kpi lines={[["Total countries", 140]]} value="28" vw={30} head="h-[32px]" pill="h-[80px]" vpt="pt-[28px]" />
            <div className="h-[19px]" />
            <Kpi lines={[["Average BMI", 120]]} value="30.49" vw={66} head="h-[31px]" pill="h-[72px]" vpt="pt-[24px]" />
            <div className="h-[22px]" />
            <Kpi lines={[["Average", 77], ["Cholesterol", 106]]} value="233.63" vw={81} head="h-[56px]" pill="h-[57px]" vpt="pt-[22px]" />
          </div>
          <div className="flex flex-col pt-[16px]">
            <Card box="ml-[5px] h-[147px] w-[1124px]" title="Average of asthma, cirrhosis, other cancer, hypertension and Average survived" tw={883} tcls="text-[25px] leading-[30px] h-[34px]">
              <SurvivalBar />
            </Card>
            <div className="mt-[19px] flex h-[233px] items-start">
              <Card box="h-[232px] w-[567px]" title="Average of asthma by smoking status and gender" tw={462} tcls="text-[20px] leading-[28px] h-[31px]">
                <LineChart />
              </Card>
              <Card box="ml-[21px] h-[233px] w-[541px]" title="Average hypertension by age group and cancer stage" tw={496} tcls="text-[20px] leading-[28px] h-[31px]">
                <StackChart />
              </Card>
            </div>
            <div className="mt-[19px] flex items-start">
              <Card box="mt-px ml-[5px] h-[213px] w-[321px]" title="Average cirrhosis by family history" tw={305} tcls="text-[20px] leading-[26px] h-[29px]">
                <Donut />
              </Card>
              <Slicer />
              <Card box="ml-[20px] h-[214px] w-[434px]" title="Average cholesterol and BMI by country" tw={347} tcls="text-[20px] leading-[25px] h-[31px]">
                <CountryMap />
              </Card>
            </div>
          </div>
        </div>
      </div>
    </main>
  );
}

function Collapse() {
  return <svg className="ml-px h-[19px] w-[20px] shrink-0" viewBox="0 0 20 19" fill="none" stroke="#252423" strokeWidth="1.500"><path d="M10 .7 1.500 9.500l8.500 8.800M19 .7l-8.500 8.800 8.500 8.800" /></svg>;
}

export default function App() {
  return (
    <div className="flex h-[1079px] w-[1912px] flex-col overflow-hidden bg-[#f3f2f1] font-['Open_Sans',sans-serif]">
      <Ribbon />
      <div className="flex h-[852px]">
        <div className="flex w-[1810px] shrink-0 flex-col border-r border-[#e3e1df]">
          <div className="flex h-[799px]">
            <LeftRail />
            <Report />
            <aside className="flex w-[49px] flex-col items-center bg-[#c9b8e8] pt-[20px]">
              <Collapse />
              <svg className="mt-[24px] ml-[6px] h-[18px] w-[18px] shrink-0" viewBox="0 0 18 18" fill="none" stroke="#252423" strokeWidth="1.600"><path d="M16.500 1v16L8 11.500H1.500v-5H8z" strokeLinejoin="round" /></svg>
              <Fit vertical w={70} className={"mt-[12px] mr-[3px] text-[22px] leading-[24px] font-bold text-[#252423] " + SERIF}>Filters</Fit>
            </aside>
          </div>
          <div className="flex h-[53px]">
            <div className="w-[54px] border-r border-[#e3e1df]" />
            <div className="flex w-[192px]">
              <svg className="h-[53px] w-[192px]" viewBox="54 992 192 53" fill="none" stroke="#605e5c" strokeWidth="1.700">
                <path d="M73 1004h27.500v15.500H73zM86.500 1019.500v4M82 1023.300h9" />
                <path d="M69.500 1034.200h36v3.500h-36z" fill="#117865" stroke="none" />
                <rect x="144.500" y="1000" width="18" height="28.500" rx="1.500" /><path d="M151.500 1024.500h4" />
                <path d="M201.500 1012.500v12l-6.500-6zM228.500 1012.500v12l6.500-6z" fill="#c8c6c4" stroke="none" />
              </svg>
            </div>
            <div className="flex w-[162px] flex-col items-center justify-between border-l border-[#c8c6c4] bg-white pt-[14px]">
              <Fit w={101} className="text-[17px] leading-[28px] font-semibold text-[#252423]">Dashboard 1</Fit>
              <div className="h-[6px] w-full bg-[#117865]" />
            </div>
            <div className="flex w-[162px] justify-center border-l border-[#e3e1df] bg-white pt-[14px]">
              <Fit w={101} className="mr-px text-[17px] leading-[28px] text-[#323130]">Dashboard 2</Fit>
            </div>
            <div className="flex w-[59px] items-center justify-center bg-[#117865]">
              <svg className="h-[15px] w-[15px]" viewBox="0 0 15 15" stroke="#fff" strokeWidth="3"><path d="M7.500 0v15M0 7.500h15" /></svg>
            </div>
          </div>
        </div>
        <aside className="flex w-[52px] flex-col items-center border-r border-[#e3e1df] pt-[20px]">
          <Collapse />
          <Fit vertical w={149} className="mt-[21px] mr-[4px] text-[20px] leading-[28px] font-semibold text-[#252423]">Visualizations</Fit>
        </aside>
        <aside className="flex w-[50px] flex-col items-center pt-[20px]">
          <Collapse />
          <Fit vertical w={49} className="mt-[22px] mr-[4px] text-[20px] leading-[28px] font-semibold text-[#252423]">Data</Fit>
        </aside>
      </div>
      <footer className="flex h-[34px] items-center justify-between border-t border-[#e3e1df] text-[#605e5c]">
        <Fit w={88} className="mt-[3px] text-[17.500px] leading-6">Page 1 of 2</Fit>
        <div className="flex h-full items-center">
          <svg className="h-[33px] w-[200px]" viewBox="1590 1046 200 33" stroke="#605e5c">
            <path d="M1596 1064h6.500M1768 1063h12M1774 1057v12" strokeWidth="2.200" /><path d="M1609.500 1063.500h150" strokeWidth="1.300" />
            <path d="M1656.500 1055h6v18h-6z" fill="#605e5c" stroke="none" /><path d="M1684.500 1060v7.500" strokeWidth="2" />
          </svg>
          <Fit w={34} className="ml-[10px] text-[17.500px] leading-6 text-[#797775]">70%</Fit>
          <svg className="mt-[2px] mr-[25px] ml-[28px] h-[18px] w-[25px]" viewBox="0 0 25 18" fill="none" stroke="#605e5c" strokeWidth="1.700"><path d="M1 1h23v16H1zM4 7V4h4M17 4h4v3M4 11v3h4M17 14h4v-3" /></svg>
        </div>
      </footer>
    </div>
  );
}
